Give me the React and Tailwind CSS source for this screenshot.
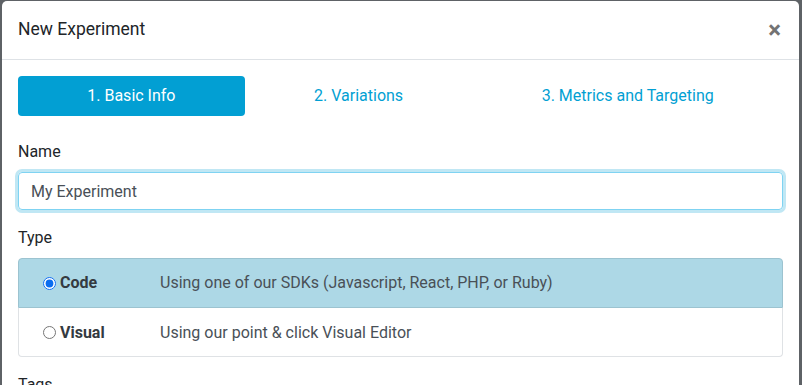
const tabs = ["1. Basic Info", "2. Variations", "3. Metrics and Targeting"];

const types = [
  {
    id: "code",
    name: "Code",
    desc: "Using one of our SDKs (Javascript, React, PHP, or Ruby)",
  },
  {
    id: "visual",
    name: "Visual",
    desc: "Using our point & click Visual Editor",
  },
];

const TypeRow = ({ type, selected, first }) => (
  <label
    className={`flex items-center pl-[24px] border cursor-pointer ${
      selected
        ? "bg-[#add8e6] border-[#9cc3d0]"
        : "bg-white border-[#dfe2e5]"
    } ${first ? "h-[50px] rounded-t-[4px]" : "h-[49px] pt-px border-t-0 rounded-b-[4px]"}`}
  >
    <span className="flex items-center w-[117px]">
      <input
        type="radio"
        name="type"
        defaultChecked={selected}
        className="w-[13px] h-[13px] m-0 mr-[4px] accent-[#0b6cf0]"
      />
      <span className="font-bold text-[#343a40]">{type.name}</span>
    </span>
    <span className="text-[#495057]">{type.desc}</span>
  </label>
);

const App = () => {
  const active = 0;

  return (
    <div
      className="w-[802px] h-[385px] overflow-hidden bg-[#5e6266] pt-px pl-[2px]"
      style={{ fontFamily: "Roboto, 'Liberation Sans', sans-serif" }}
    >
      <div className="w-[797px] h-[420px] bg-white rounded-[5px] text-[16px] text-[#212529]">
        <div className="flex items-center justify-between h-[59px] px-4 border-b border-[#dee2e6]">
          <h5 className="text-[17.5px] leading-none text-[#212529]">New Experiment</h5>
          <button className="text-[24px] leading-none font-bold text-[#737373] pr-[2px] -mt-[1px]">
            ×
          </button>
        </div>

        <div className="p-4">
          <div className="flex mb-6">
            {tabs.map((tab, i) => (
              <div
                key={tab}
                className={`flex-auto h-10 flex items-center justify-center rounded-[4px] ${
                  i === active ? "bg-[#029fd3] text-white" : "text-[#029fd3]"
                }`}
              >
                {tab}
              </div>
            ))}
          </div>

          <div className="mb-4">
            <label className="block leading-6 mb-2">Name</label>
            <input
              type="text"
              defaultValue="My Experiment"
              className="block w-full h-[38px] px-3 rounded-[4px] border border-[#7fd3f2] text-[#495057] outline-none shadow-[0_0_0_3px_rgba(2,159,211,0.25)]"
            />
          </div>

          <div className="mb-4">
            <label className="block leading-6 mb-2">Type</label>
            <div className="flex flex-col">
              {types.map((t, i) => (
                <TypeRow key={t.id} type={t} selected={i === 0} first={i === 0} />
              ))}
            </div>
          </div>

          <div>
            <label className="block leading-6 mb-2">Tags</label>
          </div>
        </div>
      </div>
    </div>
  );
};

export default App;
